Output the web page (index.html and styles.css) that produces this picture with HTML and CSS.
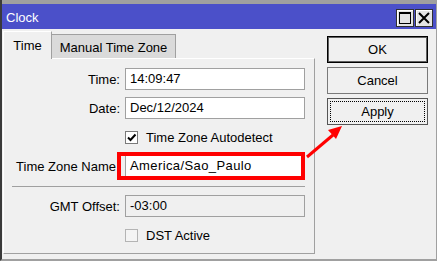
FILE: index.html
```html
<!DOCTYPE html>
<html>
<head>
<meta charset="utf-8">
<link rel="stylesheet" href="styles.css">
</head>
<body>
<div class="window">
  <div class="topband"></div>
  <div class="titlebar">
    <span class="title">Clock</span>
    <div class="tbtns">
      <span class="tbtn"><svg width="16" height="16" viewBox="0 0 16 16"><rect x="2.5" y="2.5" width="11" height="11" fill="none" stroke="#000" stroke-width="1"/><rect x="2" y="2" width="12" height="2" fill="#000"/></svg></span>
      <span class="tbtn"><svg width="16" height="16" viewBox="0 0 16 16"><path d="M3 3 L13 13 M13 3 L3 13" stroke="#000" stroke-width="2" fill="none"/></svg></span>
    </div>
  </div>
  <div class="body">
    <div class="left">
      <div class="tabs">
        <div class="tab active">Time</div>
        <div class="tab">Manual Time Zone</div>
      </div>
      <div class="panel">
        <div class="form">
          <div class="lbl">Time:</div><div class="field">14:09:47</div>
          <div class="lbl">Date:</div><div class="field">Dec/12/2024</div>
          <div></div><div class="check"><span class="box on"><svg width="11" height="11" viewBox="0 0 11 11"><path d="M2 5.5 L4.5 8 L9.5 2.5" stroke="#000" stroke-width="2" fill="none"/></svg></span><span>Time Zone Autodetect</span></div>
          <div class="lbl long">Time Zone Name</div><div class="field wide">America/Sao_Paulo</div>
          <div class="sep"></div>
          <div class="lbl">GMT Offset:</div><div class="field off">-03:00</div>
          <div></div><div class="check"><span class="box dis"></span><span>DST Active</span></div>
        </div>
      </div>
    </div>
    <div class="buttons">
      <div class="btn def">OK</div>
      <div class="btn">Cancel</div>
      <div class="btn focus"><span class="focusrect">Apply</span></div>
    </div>
  </div>
  <div class="redbox"></div>
  <svg class="arrow" width="60" height="50" viewBox="300 120 60 50">
    <path d="M307 157 L333 135" stroke="#ff0000" stroke-width="3" fill="none"/>
    <polygon points="342,126 336,139 328,130" fill="#ff0000"/>
  </svg>
</div>
</body>
</html>
```
FILE: styles.css
```css
html, body {
  margin: 0;
  padding: 0;
  background: #f0f0f0;
}
body {
  font-family: "Liberation Sans", Arial, sans-serif;
  font-size: 13px;
  color: #000;
}
.window {
  position: relative;
  width: 437px;
  height: 261px;
  box-sizing: border-box;
  border-left: 2px solid #3a3a3a;
  border-right: 1px solid #a0a0a0;
  border-bottom: 2px solid #a0a0a0;
  background: #f0f0f0;
  overflow: hidden;
}
.topband {
  height: 4px;
  background: #a0a0a0;
}
.titlebar {
  height: 25px;
  background: #4b50c9;
  display: flex;
  align-items: flex-start;
  box-sizing: border-box;
}
.title {
  color: #fff;
  padding-left: 4px;
  padding-top: 3px;
  line-height: 22px;
}
.tbtns {
  margin-left: auto;
  display: flex;
  gap: 1px;
  padding-top: 5px;
  padding-right: 3px;
}
.tbtn {
  width: 18px;
  height: 18px;
  box-sizing: border-box;
  border: 1px solid #303030;
  background: #e4e4e4;
  box-shadow: inset 1px 1px 0 #fff;
  display: flex;
  align-items: center;
  justify-content: center;
}
.tbtn svg { display: block; }
.body {
  display: flex;
  padding-top: 2px;
}
.left {
  margin-left: 1px;
}
.tabs {
  display: flex;
  align-items: flex-end;
  height: 27px;
}
.tab {
  box-sizing: border-box;
  text-align: center;
}
.tab.active {
  width: 49px;
  height: 28px;
  margin-bottom: -1px;
  position: relative;
  z-index: 1;
  background: #f0f0f0;
  border-top: 1px solid #fff;
  border-left: 1px solid #fff;
  border-right: 1px solid #a0a0a0;
  line-height: 27px;
}
.tab:not(.active) {
  width: 124px;
  height: 24px;
  background: #dadada;
  border-top: 1px solid #a0a0a0;
  border-right: 1px solid #a0a0a0;
  padding-top: 2px;
  line-height: 21px;
}
.panel {
  width: 312px;
  height: 196px;
  box-sizing: border-box;
  border-top: 1px solid #fff;
  border-left: 1px solid #fff;
  border-right: 1px solid #a0a0a0;
  border-bottom: 1px solid #a0a0a0;
  padding-top: 9px;
}
.form {
  display: grid;
  grid-template-columns: 116px 180px;
  column-gap: 5px;
  row-gap: 7px;
}
.lbl {
  text-align: right;
  align-self: center;
  white-space: nowrap;
}
.lbl.long {
  padding-right: 4px;
}
.field {
  height: 22px;
  box-sizing: border-box;
  border: 1px solid #a0a0a0;
  background: #fff;
  padding-left: 4px;
  line-height: 20px;
}
.field.wide {
  letter-spacing: 0.4px;
}
.field.off {
  background: #f0f0f0;
}
.check {
  height: 22px;
  display: flex;
  align-items: center;
  gap: 8px;
}
.box {
  width: 13px;
  height: 13px;
  box-sizing: border-box;
  border: 1px solid #7a7a7a;
  background: #fff;
  display: flex;
  align-items: center;
  justify-content: center;
}
.box svg { display: block; }
.box.dis {
  border-color: #b4b4b4;
  background: #f4f4f4;
}
.sep {
  grid-column: 1 / 3;
  height: 1px;
  background: #a0a0a0;
  margin: 2px 0 1px 8px;
}
.buttons {
  margin-left: 12px;
  margin-top: 5px;
  display: flex;
  flex-direction: column;
  gap: 4px;
}
.btn {
  width: 101px;
  height: 27px;
  box-sizing: border-box;
  border: 1px solid #7a7a7a;
  background: #f0f0f0;
  display: flex;
  align-items: center;
  justify-content: center;
}
.btn.def {
  border: 1px solid #000;
  box-shadow: inset 0 0 0 1px #606060;
}
.btn.focus {
  border-color: #555;
  padding: 2px;
}
.focusrect {
  flex: 1;
  align-self: stretch;
  border: 1px dotted #000;
  display: flex;
  align-items: center;
  justify-content: center;
}
.redbox {
  position: absolute;
  left: 115px;
  top: 152px;
  width: 188px;
  height: 28px;
  box-sizing: border-box;
  border: 4px solid #ff0000;
}
.arrow {
  position: absolute;
  left: 298px;
  top: 120px;
}
```
